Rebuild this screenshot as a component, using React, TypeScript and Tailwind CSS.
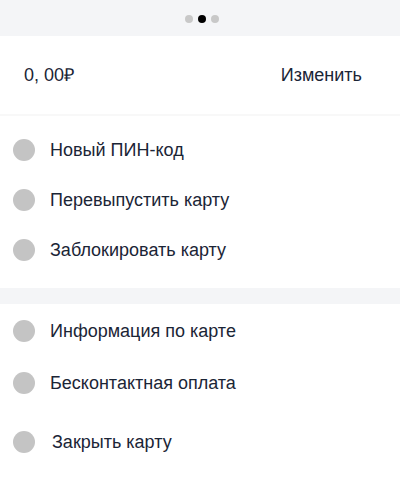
const items1 = ["Новый ПИН-код", "Перевыпустить карту", "Заблокировать карту"];

function Row({ label, className = "", textClass = "" }: { label: string; className?: string; textClass?: string }) {
  return (
    <div className={`flex h-[50px] items-center pl-[13px] ${className}`}>
      <div className="size-[22px] shrink-0 rounded-full bg-[#c4c4c4]" />
      <span className={`ml-[15px] text-[18px] text-[#1b2536] ${textClass}`}>{label}</span>
    </div>
  );
}

export default function App() {
  return (
    <div className="h-[492px] w-[400px] bg-white font-['Liberation_Sans',Arial,sans-serif]">
      <div className="flex h-[36px] items-center justify-center gap-[5px] bg-[#f4f5f7] pt-[1px] pl-[3px]">
        <span className="size-[8px] rounded-full bg-[#c8c8c8]" />
        <span className="size-[8px] rounded-full bg-black" />
        <span className="size-[8px] rounded-full bg-[#c8c8c8]" />
      </div>

      <div className="flex h-[78px] items-center justify-between px-[24px] text-[18px] text-[#1b2536]">
        <span>0, 00₽</span>
        <span className="mr-[14px]">Изменить</span>
      </div>
      <div className="h-[2px] bg-[#f8f8f8]" />

      <div className="pt-[9px] pb-[13px]">
        {items1.map((l) => (
          <Row key={l} label={l} />
        ))}
      </div>

      <div className="h-[16px] bg-[#f4f5f7]" />

      <div className="pt-[2px]">
        <Row label="Информация по карте" />
        <Row label="Бесконтактная оплата" className="mt-[2px]" />
        <Row label="Закрыть карту" className="mt-[9px]" textClass="ml-[17px]" />
      </div>
    </div>
  );
}
